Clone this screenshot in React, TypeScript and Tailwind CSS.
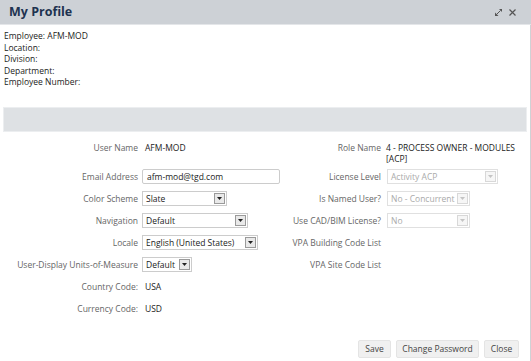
import React from "react";

function Arrow({ disabled }: { disabled?: boolean }) {
  return (
    <div
      className={
        "absolute right-[1px] top-[1px] bottom-[1px] w-[11px] flex items-center justify-center border " +
        (disabled ? "border-[#d8d8d8] bg-[#f6f6f6]" : "border-[#9a9a9a] bg-[#e9e9e9]")
      }
    >
      <svg width="5" height="3" viewBox="0 0 5 3">
        <path d="M0 0 L5 0 L2.5 3 Z" fill={disabled ? "#c4c4c4" : "#222"} />
      </svg>
    </div>
  );
}

function Select({ value, w, disabled }: { value: string; w: string; disabled?: boolean }) {
  return (
    <div
      className={
        "relative h-[15px] border bg-white flex items-center pl-[3px] whitespace-nowrap overflow-hidden " +
        w +
        " " +
        (disabled ? "border-[#e0e0e0] text-[#aaaaaa]" : "border-[#cccccc] text-[#222]")
      }
    >
      <span className="leading-none">{value}</span>
      <Arrow disabled={disabled} />
    </div>
  );
}

function Label({ children, w }: { children: React.ReactNode; w: string }) {
  return <div className={"text-right text-[#666] shrink-0 whitespace-nowrap " + w}>{children}</div>;
}

function Row({
  leftLabel,
  left,
  rightLabel,
  right,
}: {
  leftLabel?: string;
  left?: React.ReactNode;
  rightLabel?: string;
  right?: React.ReactNode;
}) {
  return (
    <div className="flex items-center h-[22px]">
      <div className="w-[282px] flex items-center shrink-0">
        <Label w="w-[138px]">{leftLabel}</Label>
        <div className="ml-[4px]">{left}</div>
      </div>
      <div className="flex items-center">
        <Label w="w-[99px]">{rightLabel}</Label>
        <div className="ml-[6px]">{right}</div>
      </div>
    </div>
  );
}

export default function App() {
  return (
    <div className="w-[531px] h-[361px] bg-white overflow-hidden flex flex-col font-['Open_Sans',sans-serif] text-[8.5px]">
      <div className="h-[25px] shrink-0 bg-[#cdd1d6] border-b border-[#e4e6e9] flex items-center justify-between pl-[9px] pr-[15px]">
        <span className="text-[12.5px] font-bold text-[#1e3350] leading-none">My Profile</span>
        <div className="flex items-center gap-[7px]">
          <svg width="7" height="7" viewBox="0 0 7 7">
            <path d="M1.5 5.5 L5.5 1.5" stroke="#555" strokeWidth="1" />
            <path d="M0 7 L0 3.5 L3.5 7 Z" fill="#555" />
            <path d="M7 0 L7 3 L4 0 Z" fill="#555" />
          </svg>
          <svg width="7" height="7" viewBox="0 0 7 7">
            <path d="M0.5 0.5 L6.5 6.5 M6.5 0.5 L0.5 6.5" stroke="#555" strokeWidth="1.2" />
          </svg>
        </div>
      </div>
      <div className="flex-1 flex flex-col border-r border-[#cfd2d5]">
        <div className="pl-[4px] pt-[5px] text-[#222] leading-[11.6px]">
          <div>Employee: AFM-MOD</div>
          <div>Location:</div>
          <div>Division:</div>
          <div>Department:</div>
          <div>Employee Number:</div>
        </div>
        <div className="mx-[3px] mt-[19px] h-[25px] bg-[#dee1e4] border border-[#eceef0]" />
        <div className="mt-[10px] flex items-start leading-[11px]">
          <div className="w-[282px] flex shrink-0">
            <Label w="w-[138px]">User Name</Label>
            <div className="ml-[7px] text-[#222]">AFM-MOD</div>
          </div>
          <div className="flex">
            <Label w="w-[99px]">Role Name</Label>
            <div className="ml-[5px] text-[#222]">
              <div>4 - PROCESS OWNER - MODULES</div>
              <div>[ACP]</div>
            </div>
          </div>
        </div>
        <div className="mt-[2px]">
          <Row
            leftLabel="Email Address"
            left={
              <div className="w-[138px] h-[15px] border border-[#cccccc] rounded-[2px] flex items-center pl-[4px] text-[#222]">
                afm-mod@tgd.com
              </div>
            }
            rightLabel="License Level"
            right={<Select value="Activity ACP" w="w-[111px]" disabled />}
          />
          <Row
            leftLabel="Color Scheme"
            left={<Select value="Slate" w="w-[85px]" />}
            rightLabel="Is Named User?"
            right={<Select value="No - Concurrent" w="w-[83px]" disabled />}
          />
          <Row
            leftLabel="Navigation"
            left={<Select value="Default" w="w-[106px]" />}
            rightLabel="Use CAD/BIM License?"
            right={<Select value="No" w="w-[83px]" disabled />}
          />
          <Row
            leftLabel="Locale"
            left={<Select value="English (United States)" w="w-[116px]" />}
            rightLabel="VPA Building Code List"
          />
          <Row
            leftLabel="User-Display Units-of-Measure"
            left={<Select value="Default" w="w-[50px]" />}
            rightLabel="VPA Site Code List"
          />
          <Row leftLabel="Country Code:" left={<div className="ml-[3px] text-[#222]">USA</div>} />
          <Row leftLabel="Currency Code:" left={<div className="ml-[3px] text-[#222]">USD</div>} />
        </div>
        <div className="mt-auto flex justify-end gap-[5px] pr-[11px] pb-[3px]">
          <button className="h-[18px] w-[33px] bg-[#f0f0f0] border border-[#e4e4e4] rounded-[2px] text-[#444] whitespace-nowrap">Save</button>
          <button className="h-[18px] w-[83px] bg-[#f0f0f0] border border-[#e4e4e4] rounded-[2px] text-[#444] whitespace-nowrap">Change Password</button>
          <button className="h-[18px] w-[35px] bg-[#f0f0f0] border border-[#e4e4e4] rounded-[2px] text-[#444] whitespace-nowrap">Close</button>
        </div>
      </div>
    </div>
  );
}
